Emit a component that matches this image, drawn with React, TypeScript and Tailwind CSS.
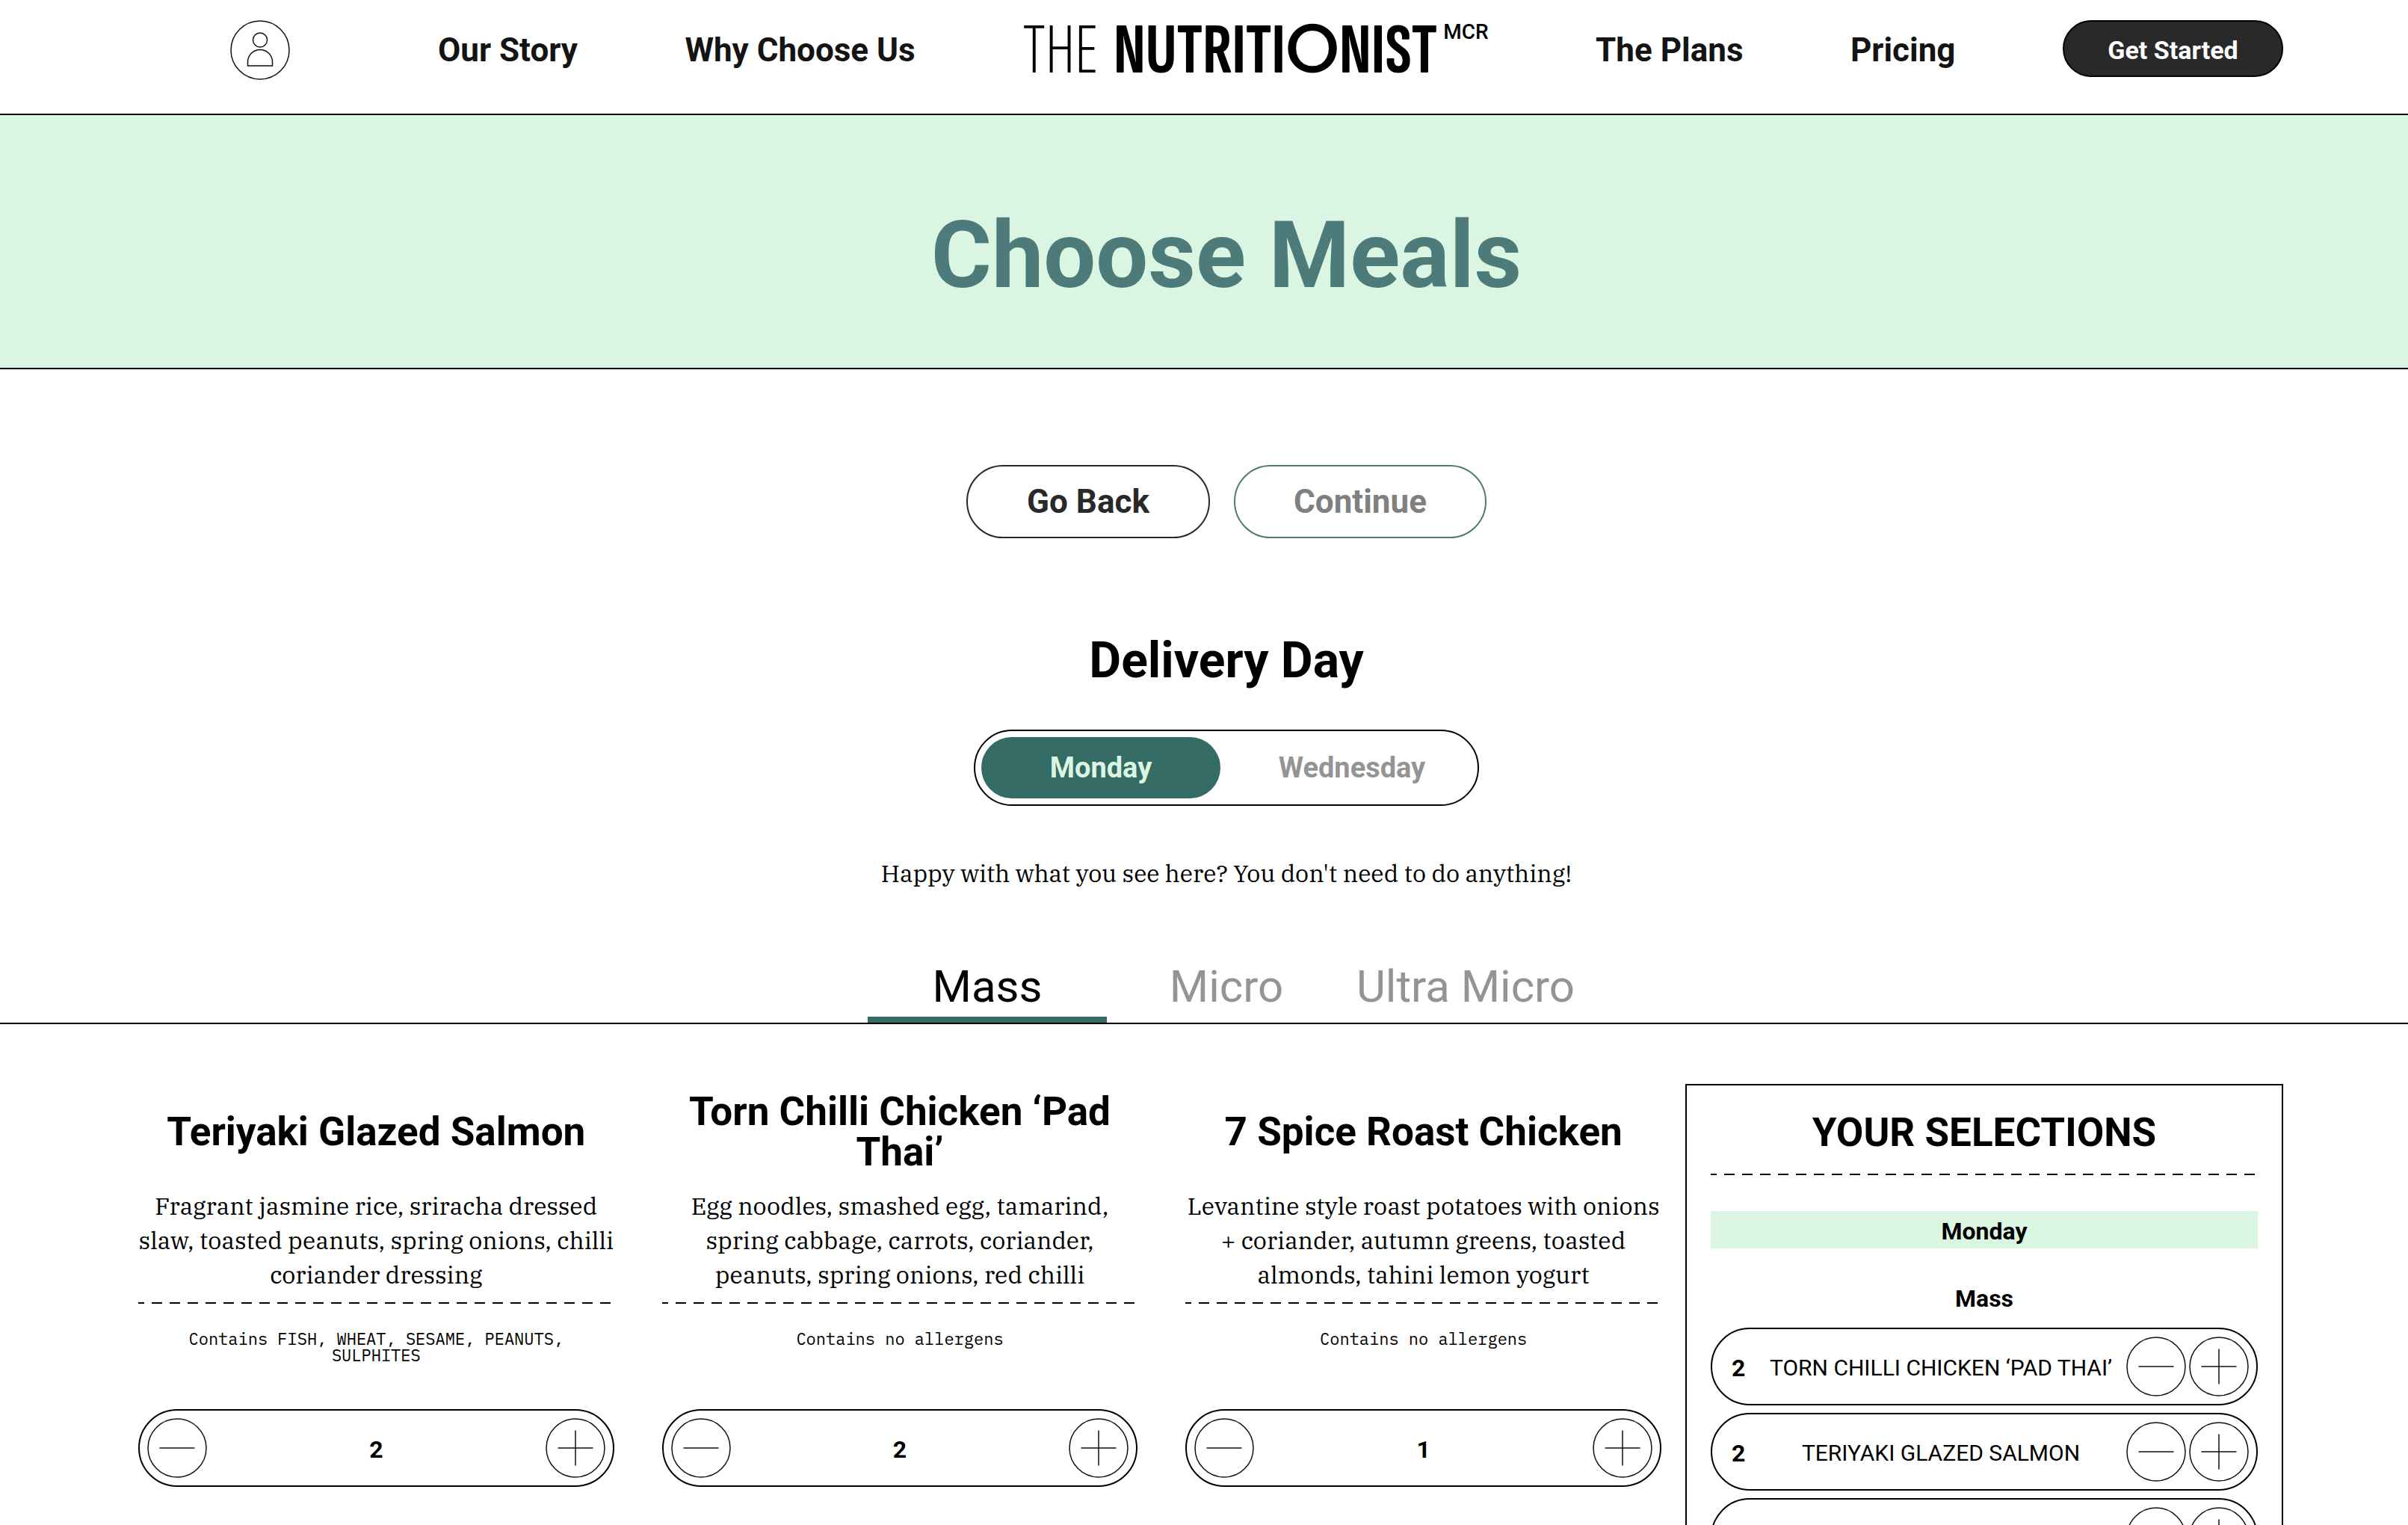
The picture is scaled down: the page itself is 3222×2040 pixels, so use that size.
import { useState } from "react";

const sans = "font-['Roboto','Liberation_Sans',sans-serif]";
const serif = "font-['IBM_Plex_Serif','DejaVu_Serif_Condensed',serif]";
const mono = "font-['IBM_Plex_Mono','Liberation_Mono',monospace]";

type Meal = { name: string; description: string; allergens: string };

const meals: Meal[] = [
  {
    name: "Teriyaki Glazed Salmon",
    description:
      "Fragrant jasmine rice, sriracha dressed slaw, toasted peanuts, spring onions, chilli coriander dressing",
    allergens: "Contains FISH, WHEAT, SESAME, PEANUTS, SULPHITES",
  },
  {
    name: "Torn Chilli Chicken ‘Pad Thai’",
    description:
      "Egg noodles, smashed egg, tamarind, spring cabbage, carrots, coriander, peanuts, spring onions, red chilli",
    allergens: "Contains no allergens",
  },
  {
    name: "7 Spice Roast Chicken",
    description:
      "Levantine style roast potatoes with onions + coriander, autumn greens, toasted almonds, tahini lemon yogurt",
    allergens: "Contains no allergens",
  },
];

const selectionOrder = [1, 0, 2];
const days = ["Monday", "Wednesday"];
const plans = ["Mass", "Micro", "Ultra Micro"];

function RoundButton({ kind, label, onClick }: { kind: "minus" | "plus"; label: string; onClick: () => void }) {
  return (
    <button type="button" aria-label={label} onClick={onClick} className="size-20 shrink-0 cursor-pointer">
      <svg viewBox="0 0 80 80" fill="none" stroke="#111" strokeWidth="1.5" className="size-full">
        <circle cx="40" cy="40" r="39" />
        <path d={kind === "minus" ? "M16.5 40h47" : "M16.5 40h47M40 16.5v47"} />
      </svg>
    </button>
  );
}

function DashedRule() {
  return (
    <div
      role="separator"
      className="h-0.5 w-full bg-[repeating-linear-gradient(90deg,#000_0_8px,transparent_8px_18px,#000_18px_24px)]"
    />
  );
}

function Logo() {
  return (
    <a href="#home" aria-label="The Nutritionist MCR" className="flex items-start leading-none text-black">
      <span className="flex items-baseline font-['Sofia_Sans_Extra_Condensed','Roboto_Condensed',sans-serif] text-[96px] leading-[76px] whitespace-nowrap">
        <span className="mr-5 font-light">THE</span>
        <span className="font-bold">NUTRITI</span>
        <span className="font-['Poppins','Inter',sans-serif] text-[92px] leading-[76px] font-medium">O</span>
        <span className="font-bold">NIST</span>
      </span>
      <span className="ml-2 text-[28px] leading-[32px] font-medium">MCR</span>
    </a>
  );
}

function Header() {
  return (
    <header className="flex h-[154px] items-start border-b-2 border-[#0e0e0e] pt-[27px] pr-[167px] pl-[308px] text-[#141414]">
      <a href="#account" aria-label="Account" className="mr-[198px] size-20 shrink-0">
        <svg viewBox="0 0 80 80" fill="none" stroke="#111" strokeWidth="1.5" className="size-full">
          <circle cx="40" cy="40" r="39" />
          <circle cx="40" cy="26.5" r="9.5" />
          <path d="M23.5 61V56a16.5 16.5 0 0 1 33 0V61Z" />
        </svg>
      </a>
      <nav className="flex grow items-start justify-between text-[44px] leading-20 font-bold">
        <a href="#story">Our Story</a>
        <a href="#why">Why Choose Us</a>
        <Logo />
        <a href="#plans">The Plans</a>
        <a href="#pricing">Pricing</a>
        <a
          href="#start"
          className="h-[76px] w-[295px] rounded-full border-2 border-black bg-[#292929] text-center text-[34px] leading-[76px] text-white"
        >
          Get Started
        </a>
      </nav>
    </header>
  );
}

export default function App() {
  const [day, setDay] = useState("Monday");
  const [plan, setPlan] = useState("Mass");
  const [counts, setCounts] = useState([2, 2, 1]);
  const change = (index: number, by: number) =>
    setCounts((all) => all.map((n, i) => (i === index ? Math.max(0, n + by) : n)));

  return (
    <div className={`${sans} h-screen overflow-hidden bg-white text-black`}>
      <Header />

      <section className="border-b-2 border-black bg-[#dbf5e3] pt-[126px] pb-[88px] pl-[60px]">
        <h1 className="text-center text-[124px] leading-none font-bold text-[#4d7b79]">Choose Meals</h1>
      </section>

      <main>
        <div className="flex flex-col items-center border-b-2 border-black pt-32 pl-[60px]">
          <div className="flex gap-8 text-[44px] font-bold">
            <button type="button" className="h-[98px] w-[326px] rounded-full border-2 border-[#292929] text-[#292929]">
              Go Back
            </button>
            <button
              type="button"
              disabled
              className="h-[98px] w-[338px] rounded-full border-2 border-[#4d7b79] text-[#808080]"
            >
              Continue
            </button>
          </div>

          <h2 className="mt-[132px] text-[66px] leading-[64px] font-bold">Delivery Day</h2>

          <div className="mt-[60px] flex gap-4 rounded-full border-2 border-black p-2" role="group" aria-label="Delivery day">
            {days.map((d) => (
              <button
                key={d}
                type="button"
                aria-pressed={day === d}
                onClick={() => setDay(d)}
                className={`h-[82px] w-80 rounded-full text-[38px] font-bold ${
                  day === d ? "bg-[#356b65] text-[#dbf5e3]" : "text-[#949494]"
                }`}
              >
                {d}
              </button>
            ))}
          </div>

          <p className={`${serif} mt-[66px] text-[32px] leading-12`}>
            Happy with what you see here? You don't need to do anything!
          </p>

          <div role="tablist" aria-label="Plan" className="mt-[98px] flex">
            {plans.map((p) => (
              <button
                key={p}
                type="button"
                role="tab"
                aria-selected={plan === p}
                onClick={() => setPlan(p)}
                className={`w-80 border-b-8 pb-2.5 text-[60px] leading-none ${
                  plan === p ? "border-[#356b65] text-black" : "border-transparent text-[#949494]"
                }`}
              >
                {p}
              </button>
            ))}
          </div>
        </div>

        <div className="flex items-start pr-[167px] pl-[153px]">
          <div className="grid grow grid-cols-3 pt-[90px]">
            {meals.map((meal, i) => (
              <article key={meal.name} className="flex flex-col px-8 text-center">
                <h3 className="flex h-[108px] items-center justify-center text-[53px] leading-[54px] font-bold">
                  {meal.name}
                </h3>
                <p className={`${serif} mt-[22px] mb-3.5 text-[32px] leading-[46px]`}>{meal.description}</p>
                <DashedRule />
                <p className={`${mono} mt-9 min-h-[105px] px-4 text-[22px] leading-[22px]`}>{meal.allergens}</p>
                <div className="flex h-[104px] items-center justify-between rounded-full border-2 border-black px-2.5">
                  <RoundButton kind="minus" label={`Remove one ${meal.name}`} onClick={() => change(i, -1)} />
                  <output className="pt-1 text-[32px] leading-none font-bold">{counts[i]}</output>
                  <RoundButton kind="plus" label={`Add one ${meal.name}`} onClick={() => change(i, 1)} />
                </div>
              </article>
            ))}
          </div>

          <aside className="mt-20 w-[800px] shrink-0 border-2 border-black px-8 pt-9 pb-8 text-center">
            <h2 className="mb-7 text-[53px] leading-[54px] font-bold">YOUR SELECTIONS</h2>
            <DashedRule />
            <h3 className="mt-12 bg-[#dbf5e3] pt-1 text-[32px] leading-[46px] font-bold">{day}</h3>
            <h4 className="mt-11 text-[32px] leading-[46px] font-bold">{plan}</h4>
            <ul className="mt-4 flex flex-col gap-2.5">
              {selectionOrder.map((i) => (
                <li key={i} className="flex h-[104px] items-center rounded-full border-2 border-black pr-2.5 pl-6.5">
                  <span className="w-8 pt-1 text-left text-[32px] leading-none font-bold">{counts[i]}</span>
                  <span className="grow pt-1 text-[30px] leading-none whitespace-nowrap uppercase">{meals[i].name}</span>
                  <span className="flex gap-1">
                    <RoundButton kind="minus" label={`Remove ${meals[i].name}`} onClick={() => change(i, -1)} />
                    <RoundButton kind="plus" label={`Add ${meals[i].name}`} onClick={() => change(i, 1)} />
                  </span>
                </li>
              ))}
            </ul>
          </aside>
        </div>
      </main>
    </div>
  );
}
